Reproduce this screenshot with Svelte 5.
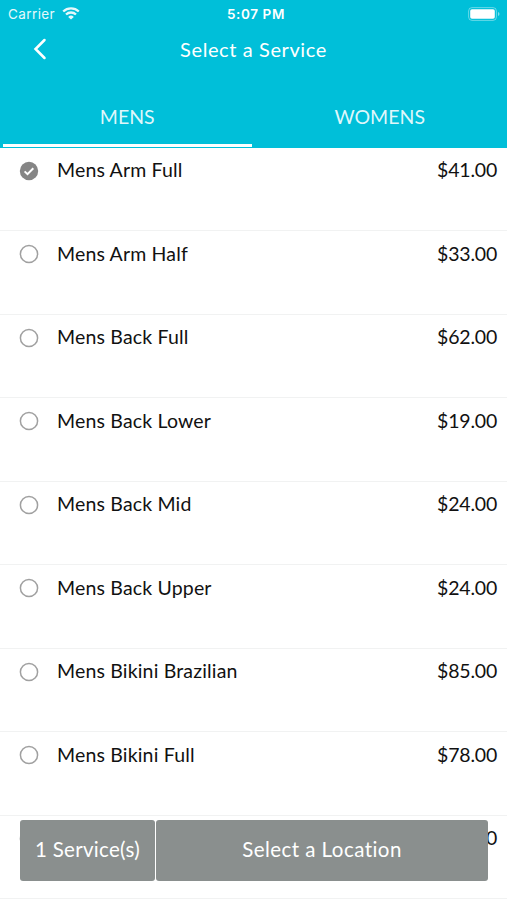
<script lang="ts">
  type Service = { name: string; price: string };

  const tabs = ["MENS", "WOMENS"];

  const services: Service[] = [
    { name: "Mens Arm Full", price: "$41.00" },
    { name: "Mens Arm Half", price: "$33.00" },
    { name: "Mens Back Full", price: "$62.00" },
    { name: "Mens Back Lower", price: "$19.00" },
    { name: "Mens Back Mid", price: "$24.00" },
    { name: "Mens Back Upper", price: "$24.00" },
    { name: "Mens Bikini Brazilian", price: "$85.00" },
    { name: "Mens Bikini Full", price: "$78.00" },
    { name: "", price: "0" }
  ];

  let activeTab = $state(0);
  let selected = $state<number[]>([0]);

  function toggle(i: number) {
    selected = selected.includes(i) ? selected.filter((s) => s !== i) : [...selected, i];
  }
</script>

<div class="screen">
  <header>
    <div class="status">
      <div class="carrier">
        <span>Carrier</span>
        <svg width="18" height="13" viewBox="0 0 18 13" fill="none" stroke="#fff" stroke-width="2.3">
          <path d="M1.2 4.5a11.2 11.2 0 0 1 15.6 0" />
          <path d="M4 7.5a7.2 7.2 0 0 1 10 0" />
          <path d="M9 12.6 6.2 9.9a4 4 0 0 1 5.6 0z" fill="#fff" stroke="none" />
        </svg>
      </div>
      <span class="time">5:07 PM</span>
      <svg class="battery" width="32" height="14" viewBox="0 0 32 14">
        <rect x="0.6" y="0.6" width="27.8" height="12.8" rx="3.4" fill="none" stroke="#fff" stroke-opacity="0.4" />
        <rect x="2.2" y="2.2" width="24.6" height="9.6" rx="1.8" fill="#fff" />
        <path d="M30 5v4q1.5-.6 1.5-2T30 5z" fill="#fff" fill-opacity="0.5" />
      </svg>
    </div>

    <div class="nav">
      <button class="back" aria-label="Back">
        <svg width="14" height="22" viewBox="0 0 14 22" fill="none" stroke="#fff" stroke-width="2.5" stroke-linecap="round">
          <path d="M11.5 2 2.5 11l9 9" />
        </svg>
      </button>
      <h1>Select a Service</h1>
    </div>

    <div class="tabs">
      {#each tabs as tab, i}
        <button class="tab" class:active={activeTab === i} onclick={() => (activeTab = i)}>{tab}</button>
      {/each}
    </div>
  </header>

  <div class="list">
    {#each services as service, i}
      <button class="row" onclick={() => toggle(i)}>
        <svg class="radio" width="20" height="20" viewBox="0 0 20 20" fill="none">
          {#if selected.includes(i)}
            <circle cx="10" cy="10" r="9.2" fill="#858585" />
            <path d="m5.6 10.4 2.9 2.8 5.8-6" stroke="#fff" stroke-width="2" />
          {:else}
            <circle cx="10" cy="10" r="8.6" stroke="#a0a0a0" stroke-width="1.5" />
          {/if}
        </svg>
        <span class="name">{service.name}</span>
        <span class="price">{service.price}</span>
      </button>
    {/each}
  </div>

  <div class="actions">
    <button class="count">{selected.length} Service(s)</button>
    <button class="location">Select a Location</button>
  </div>
</div>

<style>
  :global(body) {
    margin: 0;
    background: #fff;
  }

  .screen {
    position: relative;
    width: 507px;
    height: 900px;
    overflow: hidden;
    font-family: Lato, "Open Sans", sans-serif;
    font-size: 19.5px;
    color: #111;
  }

  button {
    border: 0;
    padding: 0;
    background: none;
    font: inherit;
    color: inherit;
    letter-spacing: inherit;
    cursor: pointer;
  }

  svg {
    display: block;
    flex: none;
  }

  header {
    height: 147.5px;
    box-sizing: border-box;
    background: #00bfd9;
    color: #fff;
  }

  .status {
    height: 27px;
    padding: 0 7px 0 8px;
    display: grid;
    grid-template-columns: 1fr auto 1fr;
    align-items: center;
    font-family: Inter, sans-serif;
    font-size: 13.5px;
  }

  .carrier {
    display: flex;
    align-items: center;
    gap: 7px;
    letter-spacing: 0.4px;
    opacity: 0.9;
  }

  .time {
    margin-left: 4px;
    font-weight: 600;
    letter-spacing: 0.6px;
  }

  .battery {
    justify-self: end;
  }

  .nav {
    height: 43px;
    display: grid;
    grid-template-columns: 80px 1fr 80px;
    align-items: center;
  }

  .back {
    justify-self: start;
    margin: 1px 0 0 33px;
  }

  h1 {
    margin: 0;
    text-align: center;
    font-size: 20px;
    font-weight: 400;
    letter-spacing: 0.6px;
  }

  .tabs {
    height: 77px;
    display: flex;
  }

  .tab {
    flex: 1;
    box-sizing: border-box;
    margin: 0 2px 0 3px;
    padding-top: 18px;
    border-bottom: 3px solid transparent;
    font-size: 19.5px;
    color: #dff7fb;
  }

  .tab:last-child {
    margin: 0 3px 0 2px;
  }

  .tab.active {
    border-color: #fff;
  }

  .row {
    width: 100%;
    height: 83.5px;
    box-sizing: border-box;
    display: flex;
    align-items: flex-start;
    padding: 10.5px 10px 0 19px;
    border-bottom: 1px solid #f1f2f2;
    text-align: left;
    line-height: 24px;
  }

  .radio {
    margin-top: 2.5px;
  }

  .name {
    flex: 1;
    margin-left: 18px;
    letter-spacing: 0.17px;
  }

  .price {
    letter-spacing: -0.2px;
  }

  .actions {
    position: absolute;
    left: 20px;
    top: 820px;
    width: 468px;
    height: 61px;
    display: flex;
    gap: 1px;
    color: #fff;
  }

  .actions button {
    padding-bottom: 3px;
    background: #8a8f8e;
    border-radius: 3px;
    font-size: 20.5px;
  }

  .count {
    width: 135px;
    letter-spacing: 0.3px;
  }

  .location {
    flex: 1;
    letter-spacing: 0.45px;
  }
</style>
